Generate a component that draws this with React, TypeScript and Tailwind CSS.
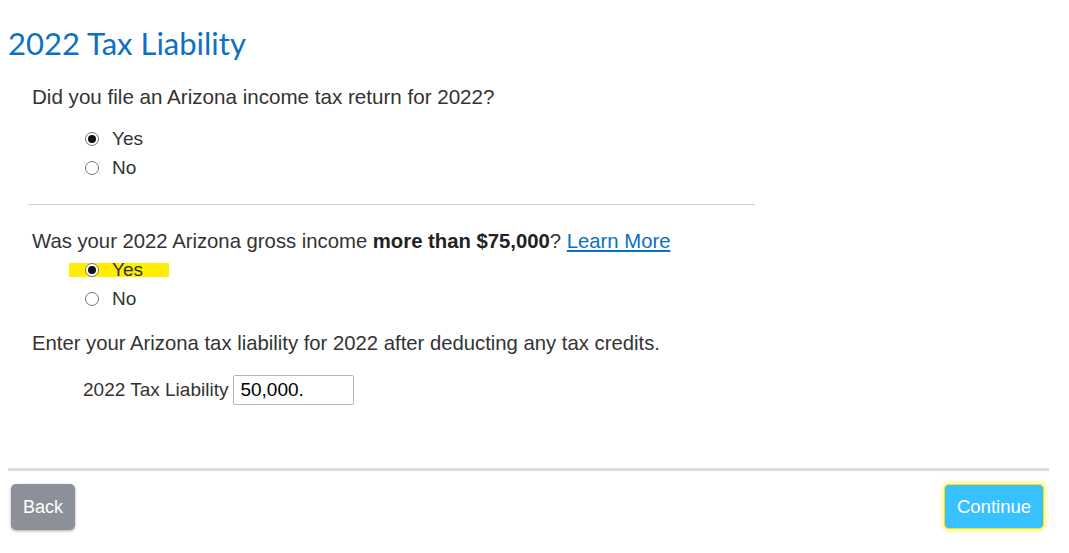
import React from "react";

function Radio({ label, checked, highlight }: { label: string; checked?: boolean; highlight?: boolean }) {
  return (
    <div className="flex items-center h-[29px]">
      <div className={`flex items-center h-[14px] ${highlight ? "bg-[#ffee00]" : ""} pl-[16px] pr-[26px] -ml-[16px]`}>
        <span className="w-[14px] h-[14px] rounded-full border border-[#767676] bg-white flex items-center justify-center">
          {checked && <span className="w-[8px] h-[8px] rounded-full bg-[#111]" />}
        </span>
        <span className="ml-[13px] text-[19px] text-[#333] leading-none">{label}</span>
      </div>
    </div>
  );
}

export default function App() {
  return (
    <div className="w-[1069px] h-[553px] bg-white overflow-hidden" style={{ fontFamily: '"Liberation Sans", Arial, sans-serif' }}>
      <div className="pl-[8px] pt-[26px]">
        <h1 className="text-[31px] leading-[34px] text-[#0c71c3]" style={{ fontFamily: 'Lato, sans-serif' }}>2022 Tax Liability</h1>
      </div>
      <div className="pl-[32px] pt-[25px] text-[20px] text-[#333]">
        <p className="leading-[24px] text-[20.6px]">Did you file an Arizona income tax return for 2022?</p>
        <div className="pl-[53px] pt-[15px]">
          <Radio label="Yes" checked />
          <Radio label="No" />
        </div>
      </div>
      <div className="ml-[28px] mt-[22px] w-[727px] h-px bg-[#d0d0d0]" />
      <div className="pl-[32px] pt-[24px] text-[20.3px] text-[#333]">
        <p className="leading-[24px]">
          Was your 2022 Arizona gross income <b className="text-[#222]">more than $75,000</b>?{" "}
          <a className="text-[#0c71c3] underline">Learn More</a>
        </p>
        <div className="pl-[53px] pt-[2px]">
          <Radio label="Yes" checked highlight />
          <Radio label="No" />
        </div>
        <p className="leading-[24px] mt-[18px]">Enter your Arizona tax liability for 2022 after deducting any tax credits.</p>
        <div className="flex items-center pl-[51px] mt-[20px]">
          <span className="text-[19px] text-[#333]">2022 Tax Liability</span>
          <div className="ml-[5px] w-[121px] h-[30px] border border-[#b5b5b5] rounded-[2px] flex items-center pl-[6px] text-[19px] text-black">50,000.</div>
        </div>
      </div>
      <div className="ml-[8px] mt-[63px] w-[1041px] h-[3px] bg-[#dcdcdc]" />
      <div className="flex justify-between pl-[11px] pr-[25px] pt-[13px]">
        <button className="w-[64px] h-[46px] rounded-[5px] bg-[#8c9098] text-white text-[18px] shadow-[0_1px_3px_rgba(0,0,0,0.35)]">Back</button>
        <button className="w-[100px] h-[45px] rounded-[5px] bg-[#38c1ff] text-white text-[18.5px] border border-[#f7e200] shadow-[0_0_4px_2px_rgba(255,236,0,0.45)]">Continue</button>
      </div>
    </div>
  );
}
